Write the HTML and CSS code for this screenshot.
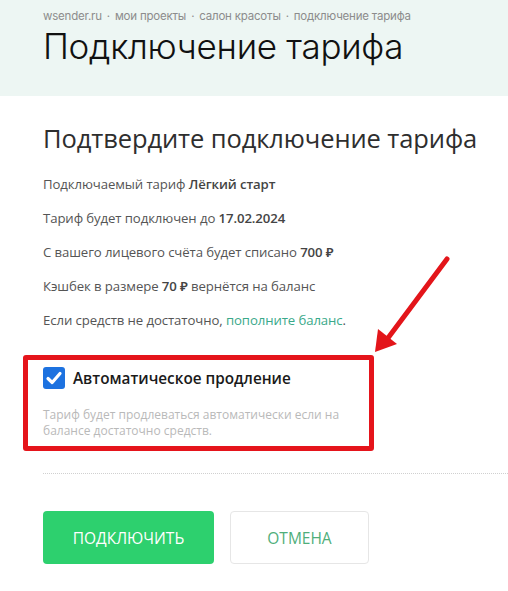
FILE: index.html
```html
<!DOCTYPE html>
<html lang="ru">
<head>
<meta charset="utf-8">
<link rel="stylesheet" href="styles.css">
</head>
<body>
<header class="page-head">
  <nav class="crumbs">wsender.ru<span class="dot">·</span>мои проекты<span class="dot">·</span>салон красоты<span class="dot">·</span>подключение тарифа</nav>
  <h1 class="title">Подключение тарифа</h1>
</header>
<main class="content">
  <h2 class="subtitle">Подтвердите подключение тарифа</h2>
  <p class="line">Подключаемый тариф <b>Лёгкий старт</b></p>
  <p class="line">Тариф будет подключен до <b>17.02.2024</b></p>
  <p class="line">С вашего лицевого счёта будет списано <b>700 ₽</b></p>
  <p class="line">Кэшбек в размере <b>70 ₽</b> вернётся на баланс</p>
  <p class="line">Если средств не достаточно, <a class="link" href="#">пополните баланс</a>.</p>

  <div class="option">
    <label class="check">
      <span class="box">
        <svg width="22" height="22" viewBox="0 0 22 22"><rect x="0" y="0" width="22" height="22" rx="3" fill="#1d72e0"/><path d="M5 11.5 L9.2 15.5 L17 6.5" fill="none" stroke="#fff" stroke-width="3.2" stroke-linecap="round" stroke-linejoin="round"/></svg>
      </span>
      <span class="check-label">Автоматическое продление</span>
    </label>
    <p class="hint">Тариф будет продлеваться автоматически если на балансе достаточно средств.</p>
  </div>

  <hr class="sep">

  <div class="actions">
    <button class="btn btn-primary">ПОДКЛЮЧИТЬ</button>
    <button class="btn btn-ghost">ОТМЕНА</button>
  </div>
</main>
<svg class="arrow" width="100" height="110" viewBox="0 0 100 110">
  <line x1="87" y1="9" x2="28" y2="88" stroke="#e3151a" stroke-width="5" stroke-linecap="round"/>
  <polygon points="15,102 18,79 37,94" fill="#e3151a"/>
</svg>
</body>
</html>
```
FILE: styles.css
```css
* { box-sizing: border-box; }
html, body { margin: 0; padding: 0; }
body {
  width: 508px;
  height: 591px;
  overflow: hidden;
  background: #fff;
  font-family: "Open Sans", "Noto Sans", sans-serif;
  color: #555;
  position: relative;
}
.page-head {
  background: #edf6f3;
  height: 96px;
  padding: 7px 0 0 43px;
}
.crumbs {
  font-family: "Inter", "Open Sans", sans-serif;
  font-size: 11.5px;
  color: #8c8c8c;
  line-height: 18px;
  letter-spacing: -0.2px;
}
.crumbs .dot { margin: 0 5px; }
.title {
  margin: 2px 0 0;
  font-family: "Inter", "Open Sans", sans-serif;
  font-weight: 300;
  font-size: 35px;
  line-height: 38px;
  color: #111;
  letter-spacing: -0.3px;
}
.content {
  padding: 26px 0 0 43px;
}
.subtitle {
  margin: 0 0 13px;
  font-size: 25.5px;
  font-weight: 500;
  color: #2e2e2e;
  line-height: 32px;
  letter-spacing: -0.1px;
}
.line {
  margin: 0;
  font-size: 13.2px;
  line-height: 34px;
  color: #555;
  letter-spacing: -0.1px;
}
.line b { font-weight: 600; color: #444; }
.link { color: #3aa98a; text-decoration: none; }
.option {
  margin: 18px 0 0 -20px;
  width: 351px;
  border: 5px solid #e5141b;
  border-radius: 3px;
  padding: 7px 14px 7px 15px;
}
.check {
  display: flex;
  align-items: center;
  gap: 8px;
}
.box { display: block; width: 22px; height: 22px; }
.box svg { display: block; }
.check-label {
  font-size: 15.3px;
  font-weight: 600;
  color: #1a1a1a;
}
.hint {
  margin: 18px 0 0;
  font-size: 12px;
  line-height: 16px;
  color: #b9b9b9;
}
.sep {
  margin: 22px 0 0;
  border: 0;
  border-top: 1px dotted #d0d0d0;
  height: 0;
}
.actions {
  display: flex;
  gap: 16px;
  margin-top: 37px;
}
.btn {
  height: 53px;
  border-radius: 4px;
  font-family: "Open Sans", "Noto Sans", sans-serif;
  font-size: 15.5px;
  font-weight: 400;
  letter-spacing: 0;
  cursor: pointer;
}
.btn-primary {
  width: 171px;
  background: #2dd06e;
  border: 0;
  color: #fff;
}
.btn-ghost {
  width: 139px;
  background: #fff;
  border: 1px solid #e6e6e6;
  color: #4fae7a;
}
.arrow {
  position: absolute;
  left: 360px;
  top: 250px;
}
```
